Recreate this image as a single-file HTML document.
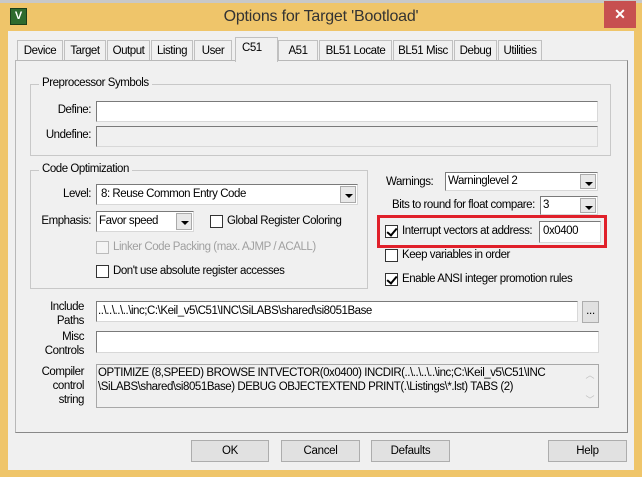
<!DOCTYPE html>
<html><head><meta charset="utf-8"><style>
*{box-sizing:border-box;margin:0;padding:0}
body{width:642px;height:477px;overflow:hidden;background:#efc56a;font-family:"Liberation Sans",Arial,sans-serif;font-size:11.5px;color:#000;position:relative}
.a{position:absolute}
.t{position:absolute;white-space:nowrap;letter-spacing:-0.45px}
.inp{position:absolute;background:#fff;border:1px solid #7a7a7a;border-right-color:#d8d8d8;border-bottom-color:#d8d8d8}
.dis{background:#f0f0f0}
.grp{position:absolute;border:1px solid #c8c8c8}
.gt{position:absolute;background:#f0f0f0;padding:0 3px;top:-8px;left:8px;white-space:nowrap;letter-spacing:-0.45px}
.cb{position:absolute;width:13px;height:13px;background:#fff;border:1px solid #333}
.cb.d{border-color:#bbb;background:#f4f4f4}
.cb.k::after{content:"";position:absolute;left:3px;top:0px;width:4px;height:8px;border:solid #000;border-width:0 2px 2px 0;transform:rotate(40deg)}
.dd{position:absolute;right:1px;top:1px;bottom:1px;width:16px;background:#e8e8e8;border:1px solid #aaa}
.dd::after{content:"";position:absolute;left:4px;top:7px;border:4px solid transparent;border-top:4px solid #000;border-bottom:0}
.btn{position:absolute;background:#e1e1e1;border:1px solid #adadad;text-align:center;line-height:20px;letter-spacing:-0.3px}
.tab{position:absolute;top:40px;height:21px;border:1px solid #c0c0c0;border-bottom:none;background:#f0f0f0;text-align:center;line-height:20px;letter-spacing:-0.45px}
</style></head><body>
<div class="a" style="left:0;top:0;width:642px;height:3px;background:#c8c8c8"></div>
<div class="a" style="left:10px;top:8px;width:17px;height:17px;background:#2e6b2e;border:1px solid #1a3f1a;color:#fff;font-weight:bold;font-size:11px;text-align:center;line-height:15px">V</div>
<div class="t" style="left:0;width:642px;text-align:center;top:8px;font-size:16px;color:#333;letter-spacing:-0.2px">Options for Target 'Bootload'</div>
<div class="a" style="left:604px;top:1px;width:32px;height:27px;background:#c75050;color:#fff;text-align:center;line-height:27px;font-size:14px;font-weight:bold">✕</div>
<div class="a" style="left:8px;top:31px;width:626px;height:439px;background:#f0f0f0"></div>

<div class="tab" style="left:17px;width:46px">Device</div>
<div class="tab" style="left:64px;width:42px">Target</div>
<div class="tab" style="left:107px;width:43px">Output</div>
<div class="tab" style="left:151px;width:42px">Listing</div>
<div class="tab" style="left:194px;width:38px">User</div>
<div class="tab" style="left:278px;width:40px">A51</div>
<div class="tab" style="left:319px;width:73px">BL51 Locate</div>
<div class="tab" style="left:393px;width:60px">BL51 Misc</div>
<div class="tab" style="left:454px;width:43px">Debug</div>
<div class="tab" style="left:498px;width:44px">Utilities</div>
<div class="a" style="left:15px;top:60px;width:613px;height:373px;border:1px solid #b8b8b8;border-right-color:#888;border-bottom-color:#888;background:#f0f0f0"></div>
<div class="tab" style="left:235px;top:37px;width:43px;height:25px;z-index:2;background:#f0f0f0;text-align:left;padding-left:6px;line-height:20px">C51</div>

<div class="grp" style="left:30px;top:84px;width:581px;height:72px"><span class="gt">Preprocessor Symbols</span></div>
<div class="t" style="left:30px;width:61px;text-align:right;top:104px">Define:</div>
<div class="inp" style="left:96px;top:101px;width:502px;height:21px"></div>
<div class="t" style="left:30px;width:61px;text-align:right;top:129px">Undefine:</div>
<div class="inp dis" style="left:96px;top:126px;width:502px;height:21px"></div>

<div class="grp" style="left:30px;top:170px;width:338px;height:119px"><span class="gt">Code Optimization</span></div>
<div class="t" style="left:30px;width:61px;text-align:right;top:188px">Level:</div>
<div class="inp" style="left:96px;top:184px;width:262px;height:21px"><span class="t" style="left:4px;top:3px">8: Reuse Common Entry Code</span><div class="dd"></div></div>
<div class="t" style="left:30px;width:61px;text-align:right;top:215px">Emphasis:</div>
<div class="inp" style="left:96px;top:211px;width:98px;height:21px"><span class="t" style="left:2px;top:3px">Favor speed</span><div class="dd"></div></div>
<div class="cb" style="left:210px;top:215px"></div><div class="t" style="left:227px;top:215px">Global Register Coloring</div>
<div class="cb d" style="left:96px;top:241px"></div><div class="t" style="left:113px;top:241px;color:#a0a0a0">Linker Code Packing (max. AJMP / ACALL)</div>
<div class="cb" style="left:96px;top:265px"></div><div class="t" style="left:113px;top:265px">Don't use absolute register accesses</div>

<div class="t" style="left:386px;top:176px">Warnings:</div>
<div class="inp" style="left:445px;top:172px;width:153px;height:19px"><span class="t" style="left:2px;top:2px">Warninglevel 2</span><div class="dd"></div></div>
<div class="t" style="left:392px;top:199px">Bits to round for float compare:</div>
<div class="inp" style="left:540px;top:196px;width:58px;height:19px"><span class="t" style="left:2px;top:2px">3</span><div class="dd"></div></div>
<div class="a" style="left:377px;top:215px;width:230px;height:33px;border:3px solid #e0202a"></div>
<div class="cb k" style="left:385px;top:225px"></div><div class="t" style="left:402px;top:225px">Interrupt vectors at address:</div>
<div class="inp" style="left:539px;top:221px;width:62px;height:22px"><span class="t" style="left:3px;top:3px">0x0400</span></div>
<div class="cb" style="left:385px;top:249px"></div><div class="t" style="left:402px;top:249px">Keep variables in order</div>
<div class="cb k" style="left:385px;top:273px"></div><div class="t" style="left:402px;top:273px">Enable ANSI integer promotion rules</div>

<div class="t" style="left:30px;width:54px;text-align:right;top:300px;line-height:14px">Include<br>Paths</div>
<div class="inp" style="left:96px;top:301px;width:482px;height:21px"><span class="t" style="left:1px;top:3px">..\..\..\..\inc;C:\Keil_v5\C51\INC\SiLABS\shared\si8051Base</span></div>
<div class="btn" style="left:582px;top:301px;width:17px;height:22px;line-height:18px">...</div>
<div class="t" style="left:30px;width:54px;text-align:right;top:330px;line-height:14px">Misc<br>Controls</div>
<div class="inp" style="left:96px;top:331px;width:503px;height:22px"></div>
<div class="t" style="left:30px;width:54px;text-align:right;top:365px;line-height:14px">Compiler<br>control<br>string</div>
<div class="inp dis" style="left:96px;top:364px;width:503px;height:44px;border-color:#a8a8a8"><div class="t" style="left:1px;top:1px;line-height:14px">OPTIMIZE (8,SPEED) BROWSE INTVECTOR(0x0400) INCDIR(..\..\..\..\inc;C:\Keil_v5\C51\INC<br>\SiLABS\shared\si8051Base) DEBUG OBJECTEXTEND PRINT(.\Listings\*.lst) TABS (2)</div>
<div class="t" style="right:4px;top:3px;color:#c0c0c0;font-size:9px">︿</div><div class="t" style="right:4px;top:28px;color:#c0c0c0;font-size:9px">﹀</div></div>

<div class="btn" style="left:191px;top:440px;width:78px;height:22px">OK</div>
<div class="btn" style="left:281px;top:440px;width:79px;height:22px">Cancel</div>
<div class="btn" style="left:371px;top:440px;width:79px;height:22px">Defaults</div>
<div class="btn" style="left:548px;top:440px;width:79px;height:22px">Help</div>
</body></html>
